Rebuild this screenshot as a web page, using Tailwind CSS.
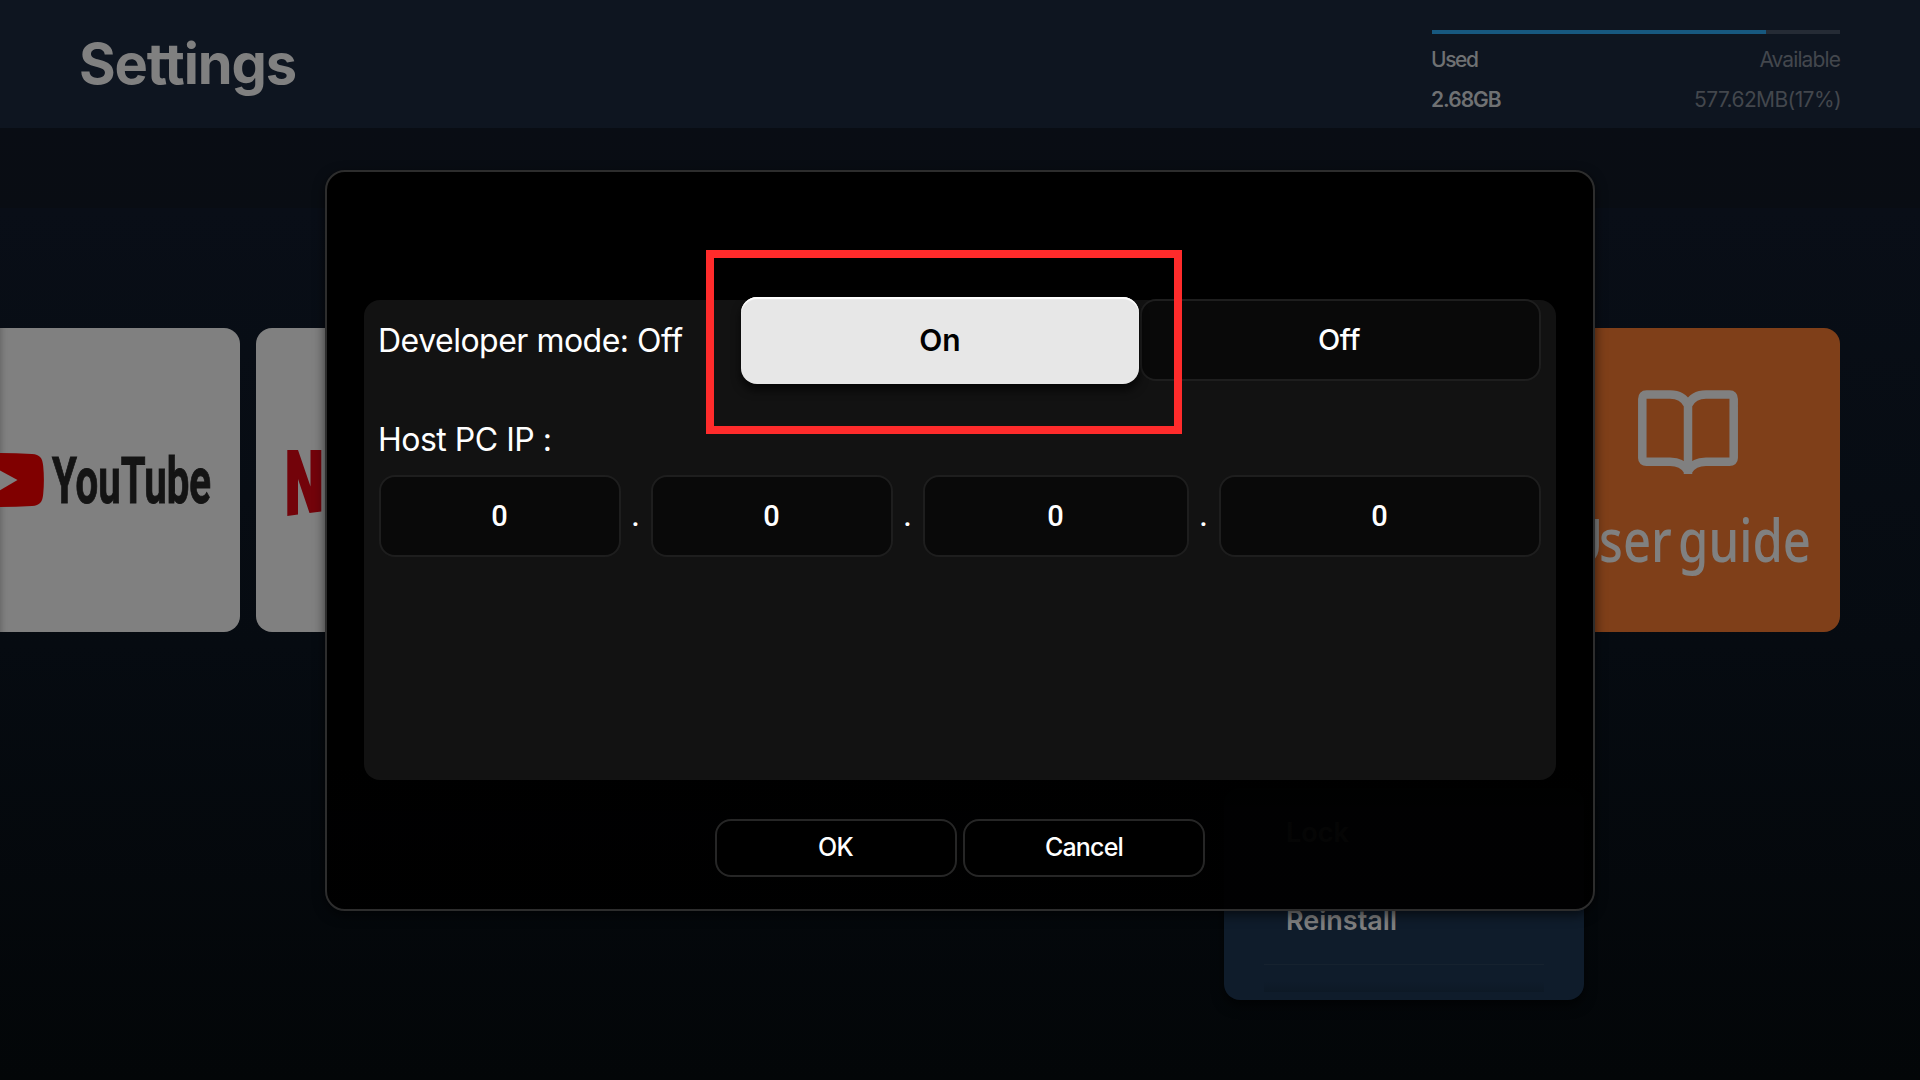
<!DOCTYPE html>
<html lang="en">
<head>
<meta charset="utf-8">
<title>Settings</title>
<script src="https://cdn.jsdelivr.net/npm/@tailwindcss/browser@4"></script>
</head>
<body class="relative flex h-[1080px] w-[1920px] flex-col overflow-hidden bg-[#090d14] font-['Inter',sans-serif]">
  <header class="flex h-32 shrink-0 justify-between bg-[#0e1520] pl-[79px] pr-20">
    <h1 class="pt-8 text-[56px] leading-[64px] font-bold tracking-[-1.1px] text-[#808080]">Settings</h1>
    <div class="w-[408px] pt-[30px] text-[21px]">
      <div class="h-1 bg-[#252b35]"><div class="h-full bg-[#17587f]" style="width:81.9%"></div></div>
      <div class="-ml-px flex justify-between pt-[10px] leading-[32px]">
        <span class="font-medium tracking-[-1.4px] text-[#6f7173]">Used</span><span class="tracking-[-0.9px] text-[#43474d]">Available</span>
      </div>
      <div class="-ml-px flex justify-between pt-2 leading-[32px]">
        <span class="font-semibold tracking-[-1px] text-[#6f7173]">2.68GB</span><span class="-mr-px tracking-[-0.6px] text-[#43474d]">577.62MB(17%)</span>
      </div>
    </div>
  </header>
  <div class="h-20 shrink-0 bg-linear-to-b from-[#090d14] to-[#090d13]"></div>
  <main class="flex flex-1 items-start justify-between bg-linear-to-b from-[#090e17] via-[#060b11] via-50% to-[#030608] pr-20 pt-[120px]">
    <div class="flex gap-4">
      <div class="h-[304px] w-60 rounded-r-2xl bg-[#808080] shadow-[inset_8px_0_6px_-7px_rgba(0,0,0,0.25)]">
        <svg class="h-full w-full overflow-visible" viewBox="0 0 240 304">
          <path d="M-22 125.500Q5 124.500 32 126C40 126.500 42.500 130 43.200 138Q44.600 152 43.200 166C42.500 174 40 177.500 32 178Q5 179.500 -22 178.500Z" fill="#800000"/>
          <path d="M-11 136.500L17.500 152L-11 168.500Z" fill="#808080"/>
          <text x="52" y="175.300" font-family="Roboto, sans-serif" font-weight="700" font-size="65" fill="#141414" stroke="#141414" stroke-width="1" textLength="159" lengthAdjust="spacingAndGlyphs">YouTube</text>
        </svg>
      </div>
      <div class="h-[304px] w-[120px] rounded-l-2xl bg-[#808080]">
        <svg class="h-full w-full" viewBox="0 0 120 304">
          <path d="M31.300 122H42L54.500 158.500V122H65.300V183.500L53.500 185L42 151V186.500L31.300 188Z" fill="#73030a"/>
        </svg>
      </div>
    </div>
    <div class="h-[304px] w-[304px] rounded-2xl bg-[#7f3f19]">
      <svg class="h-full w-full overflow-visible" viewBox="0 0 304 304">
        <g fill="none" stroke="#808080" stroke-width="8.500">
          <path d="M152 146V77C149 71 143 66.500 134 66.500H110.500Q106.300 66.500 106.300 71V130Q106.300 133.800 110.500 133.800H134C144 133.800 149 138 152 143M152 77C155 71 161 66.500 170 66.500H193.500Q197.700 66.500 197.700 71V130Q197.700 133.800 193.500 133.800H170C160 133.800 155 138 152 143"/>
        </g>
        <text x="26" y="234" dx="5 -5" font-family="Noto Sans, sans-serif" font-size="60" font-weight="500" fill="#808080" word-spacing="-8" textLength="244" lengthAdjust="spacingAndGlyphs">User guide</text>
      </svg>
    </div>
  </main>

  <!-- Context menu, partly hidden by the dialog -->
  <div class="absolute left-[1224px] top-[788px] flex h-[212px] w-[360px] flex-col rounded-2xl bg-[#0f1c2b] px-10 text-[27px] font-semibold text-[#808080] shadow-[0_6px_12px_rgba(0,0,0,0.6)]">
    <div class="flex h-[88px] items-center border-b border-[#16222f] pl-[22px] pt-[3px]">Lock</div>
    <div class="flex h-[89px] items-center border-b border-[#16222f] pl-[22px] pt-[2px]">Reinstall</div>
    <div class="mt-4 h-[11px] bg-linear-to-b from-transparent to-[#0d1926]"></div>
  </div>

  <!-- Developer mode dialog -->
  <section class="absolute left-[325px] top-[170px] flex h-[741px] w-[1270px] flex-col items-center rounded-[20px] border-2 border-[#2d2d2d] bg-linear-to-b from-black from-80% to-black/96 to-87% pt-32 text-white shadow-[0_4px_12px_rgba(0,0,0,0.6)]">
    <div class="h-[480px] w-[1192px] rounded-2xl bg-[#121212] px-[15px]">
      <div class="flex h-[81px] items-center">
        <div class="-ml-px w-[363px] text-[32px] tracking-[-0.5px]">Developer mode: Off</div>
        <button class="relative -my-1 flex h-[87px] w-[398px] items-center justify-center rounded-2xl bg-[#e7e7e7] text-[30px] font-semibold text-black shadow-[inset_0_2px_1px_#fff,0_6px_10px_rgba(0,0,0,0.7)]">On</button>
        <button class="-mt-px ml-px flex h-[82px] w-[401px] items-center justify-center rounded-2xl border-2 border-[#1e1e1e] bg-[#090909] pr-[3px] text-[29px] font-medium tracking-[-0.3px]">Off</button>
      </div>
      <div class="-ml-px flex h-[94px] items-center pt-[24px] text-[32px] tracking-[-0.5px]">Host PC IP :</div>
      <div class="flex h-[82px] text-center font-['Roboto',sans-serif] text-[29px] font-medium">
        <div class="flex w-[242px] items-center justify-center rounded-2xl border-2 border-[#1e1e1e] bg-[#090909] pr-px pt-[2px]">0</div>
        <div class="w-[30px] pt-[20px] pr-px">.</div>
        <div class="flex w-[242px] items-center justify-center rounded-2xl border-2 border-[#1e1e1e] bg-[#090909] pr-px pt-[2px]">0</div>
        <div class="w-[30px] pt-[20px] pr-px">.</div>
        <div class="flex w-[266px] items-center justify-center rounded-2xl border-2 border-[#1e1e1e] bg-[#090909] pr-px pt-[2px]">0</div>
        <div class="w-[30px] pt-[20px] pr-px">.</div>
        <div class="flex w-[322px] items-center justify-center rounded-2xl border-2 border-[#1e1e1e] bg-[#090909] pr-px pt-[2px]">0</div>
      </div>
    </div>
    <div class="mt-[39px] flex gap-[6px] text-[25px] font-medium tracking-[-0.8px]">
      <button class="h-[58px] w-[242px] rounded-2xl border-2 border-[#262626] bg-black pr-px">OK</button>
      <button class="h-[58px] w-[242px] rounded-2xl border-2 border-[#262626] bg-black">Cancel</button>
    </div>
  </section>

  <!-- Highlight frame around the On button -->
  <div class="absolute left-[706px] top-[250px] h-[184px] w-[476px] border-8 border-[#ff2b2b]"></div>
</body>
</html>
